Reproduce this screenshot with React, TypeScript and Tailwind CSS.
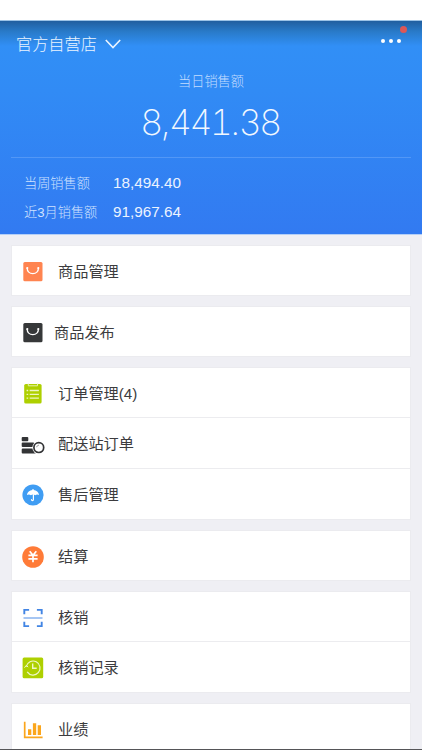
import type { ReactNode } from "react";

interface MenuItem {
  label: string;
  icon: ReactNode;
  height: string;
  labelClass?: string;
}

const BagIcon = ({ color }: { color: string }) => (
  <svg className="w-[22px] h-[22px]" viewBox="0 0 22 22" fill="none">
    <rect x="1.3" y="1.1" width="19.2" height="19.2" rx="1.5" fill={color} />
    <path
      d="M5.2 7.2c0 3.2 2.3 5.4 5.6 5.4s5.6-2.2 5.6-5.4"
      stroke="#fff"
      strokeWidth={1.4}
      strokeLinecap="round"
    />
    <circle cx="5.3" cy="7" r="1.1" fill="#fff" />
    <circle cx="16.3" cy="7" r="1.1" fill="#fff" />
  </svg>
);

const ClipboardIcon = () => (
  <svg className="w-[22px] h-[22px]" viewBox="0 0 22 22" fill="none">
    <rect x="2.2" y="1" width="17.4" height="19.6" rx="1.6" fill="#aed000" />
    <path d="M6.3 0.6v2.2h9.2V0.6" stroke="#e6f2ad" strokeWidth={1} />
    <path
      d="M4.6 7.5h1.6M4.6 11.3h1.6M4.6 15.1h1.6M7.7 7.5h9.2M7.7 11.3h9.2M7.7 15.1h9.2"
      stroke="#edf6c4"
      strokeWidth={1.3}
    />
  </svg>
);

const DeliveryIcon = () => (
  <svg className="-ml-[1px] w-[24px] h-[22px]" viewBox="0 0 24 22" fill="none">
    <rect x="0.7" y="4" width="6.6" height="4.2" rx="1" fill="#333436" />
    <rect x="0.7" y="9.4" width="12.5" height="4.5" rx="1" fill="#333436" />
    <path
      d="M1.7 15.4h10.6l2.4 5H1.7a1 1 0 0 1-1-1v-3a1 1 0 0 1 1-1z"
      fill="#333436"
    />
    <circle cx="17.8" cy="14.6" r="6.5" fill="#fff" />
    <circle cx="17.8" cy="14.6" r="4.9" stroke="#333436" strokeWidth={1.7} />
    <path d="M15.7 14.2c.2-1.2 1-1.9 2.2-2" stroke="#777" strokeWidth={0.8} />
  </svg>
);

const UmbrellaIcon = () => (
  <svg className="w-[22px] h-[22px]" viewBox="0 0 22 22" fill="none">
    <circle cx="11" cy="11" r="10.6" fill="#409df3" />
    <path
      d="M5 11.1c.3-2.9 2.7-5 5.4-5.1V5h1.2v1c2.7.1 5.1 2.2 5.4 5.1-1.1-.9-2.6-.9-3.8.1-1.3-.9-3-.9-4.3 0-1.2-1-2.8-1-3.9-.1z"
      fill="#fff"
    />
    <path
      d="M11.4 10.5v5.1c0 1.3-1.8 1.3-1.9.1"
      stroke="#fff"
      strokeWidth={1.2}
      strokeLinecap="round"
    />
  </svg>
);

const YuanIcon = () => (
  <svg className="w-[22px] h-[22px]" viewBox="0 0 22 22" fill="none">
    <circle cx="11" cy="11" r="10.8" fill="#ff7b38" />
    <path
      d="M7.7 5.3l3.3 4 3.3-4M11 9.3v7M6.4 9.4h9.2M6.4 12.8h9.2"
      stroke="#fff"
      strokeWidth={1.7}
    />
  </svg>
);

const ScanIcon = () => (
  <svg className="w-[22px] h-[22px]" viewBox="0 0 22 22" fill="none">
    <path
      d="M2.3 7.3V2.9h4.8M14.9 2.9h4.8v4.4M2.3 14.7v4.4h4.8M14.9 19.1h4.8v-4.4"
      stroke="#4285e4"
      strokeWidth={1.9}
    />
    <path d="M1.5 11h19" stroke="#6ba0eb" strokeWidth={1.2} />
  </svg>
);

const HistoryIcon = () => (
  <svg className="w-[22px] h-[22px]" viewBox="0 0 22 22" fill="none">
    <rect x="0.6" y="0.6" width="20.6" height="20.6" rx="1.5" fill="#aed000" />
    <path d="M4.2 9.6a7 7 0 1 1 1 5.3" stroke="#eff8c8" strokeWidth={1.2} />
    <path d="M2.5 10.7l1.7-2.3 2 1.7" stroke="#eff8c8" strokeWidth={1} />
    <path d="M10.7 6.5v4.8h4" stroke="#eff8c8" strokeWidth={1.4} />
  </svg>
);

const ChartIcon = () => (
  <svg className="w-[22px] h-[22px]" viewBox="0 0 22 22" fill="none">
    <path d="M2.7 2.8v15.5h17.9" stroke="#fba61c" strokeWidth={1.7} />
    <path
      d="M6 10.2h3.3v5.7H6zM10.9 4.2h3.3v11.7h-3.3zM15.7 6.2H19v9.7h-3.3z"
      fill="#fba61c"
    />
  </svg>
);

const groups: MenuItem[][] = [
  [{ label: "商品管理", icon: <BagIcon color="#ff8450" />, height: "h-[49px]" }],
  [
    {
      label: "商品发布",
      icon: <BagIcon color="#363839" />,
      height: "h-[49px]",
      labelClass: "-ml-1",
    },
  ],
  [
    { label: "订单管理(4)", icon: <ClipboardIcon />, height: "h-[50px]" },
    { label: "配送站订单", icon: <DeliveryIcon />, height: "h-[51px]" },
    { label: "售后管理", icon: <UmbrellaIcon />, height: "h-[50px]" },
  ],
  [{ label: "结算", icon: <YuanIcon />, height: "h-[49px]" }],
  [
    { label: "核销", icon: <ScanIcon />, height: "h-[50px]" },
    { label: "核销记录", icon: <HistoryIcon />, height: "h-[50px]" },
  ],
  [{ label: "业绩", icon: <ChartIcon />, height: "h-[50px]" }],
];

const Header = () => (
  <header className="h-[214px] shrink-0 border-t border-[#9cc3e6] bg-[linear-gradient(180deg,#215f9f_0px,#297bca_11px,#318ff6_25px,#318bf5_70px,#327af1_213px)] text-white">
    <div className="flex h-[46px] items-center justify-between pl-4 pr-[21px]">
      <button className="flex items-center gap-2 text-[16.2px] font-light leading-6 text-[#eaf4ff]">
        官方自营店
        <svg className="w-4 h-[10px]" viewBox="0 0 16 10" fill="none">
          <path d="M0.8 1L8 8.6 15.2 1" stroke="currentColor" strokeWidth={1.6} />
        </svg>
      </button>
      <button className="relative -mt-[7px] flex gap-1">
        <span className="size-[4px] rounded-full bg-white" />
        <span className="size-[4px] rounded-full bg-white" />
        <span className="size-[4px] rounded-full bg-white" />
        <span className="absolute -right-[6px] -top-[13px] size-[7px] rounded-full bg-[#dc5757]" />
      </button>
    </div>
    <div className="flex flex-col items-center">
      <p className="mt-[5px] text-[13.2px] font-light leading-5 text-[#c3ddff]">
        当日销售额
      </p>
      <p className="mt-[10px] pr-[2px] font-[Inter] text-[35.5px] font-extralight leading-[42px] tracking-[-2.4px] tabular-nums text-[#f2f8ff]">
        8<span className="tracking-[-1.4px]">,</span>441
        <span className="tracking-[-1.4px]">.</span>38
      </p>
    </div>
    <div className="mx-[11px] mt-[13px] border-t border-[#5297f6]" />
    <dl className="mt-[11px] pl-6 text-[13.2px] font-light">
      <div className="flex h-[29px] items-center">
        <dt className="w-[89px] text-[#cfe2ff]">当周销售额</dt>
        <dd className="text-[15.3px] text-[#ebf3ff]">18,494.40</dd>
      </div>
      <div className="flex h-[29px] items-center">
        <dt className="w-[89px] text-[#cfe2ff]">近3月销售额</dt>
        <dd className="text-[15.3px] text-[#ebf3ff]">91,967.64</dd>
      </div>
    </dl>
  </header>
);

const App = () => {
  return (
    <div className="flex h-[750px] w-[422px] flex-col overflow-hidden border-b border-[#555558] bg-[#efeff4] font-['Liberation_Sans','Noto_Sans_CJK_SC',sans-serif]">
      <div className="h-5 shrink-0 bg-white" />
      <Header />
      <main className="flex min-h-0 flex-1 flex-col gap-3 overflow-hidden border-t border-[#b4cff7] px-3 pt-[11px]">
        {groups.map((group, index) => (
          <section
            key={index}
            className="shrink-0 divide-y divide-[#ececef] bg-white shadow-[0_0_0_1px_#ebebef]"
          >
            {group.map((item) => (
              <div
                key={item.label}
                className={`flex items-center pl-[10px] ${item.height}`}
              >
                <span className="flex w-[36px] shrink-0 pt-[2px]">
                  {item.icon}
                </span>
                <span
                  className={`pt-[2px] text-[15.2px] leading-6 text-[#3c3c3e] ${item.labelClass ?? ""}`}
                >
                  {item.label}
                </span>
              </div>
            ))}
          </section>
        ))}
      </main>
    </div>
  );
};

export default App;
